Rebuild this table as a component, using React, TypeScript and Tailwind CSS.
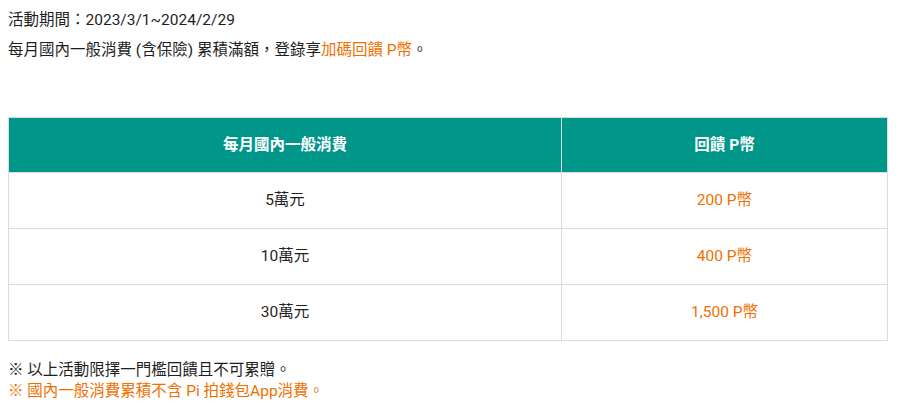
import React from "react";

const rows = [
  { a: "5萬元", b: "200 P幣" },
  { a: "10萬元", b: "400 P幣" },
  { a: "30萬元", b: "1,500 P幣" },
];

export default function App() {
  return (
    <div
      className="w-[900px] h-[415px] bg-white px-[8px] pt-[10px] text-[15.5px] leading-[21px] text-[#1e1e1e]"
      style={{ fontFamily: 'Roboto, "Noto Sans CJK TC", sans-serif' }}
    >
      <p>活動期間：2023/3/1~2024/2/29</p>
      <p className="mt-[9px]">
        每月國內一般消費 (含保險) 累積滿額，登錄享<span className="text-[#f07000]">加碼回饋 P幣</span>。
      </p>
      <div className="mt-[56px] w-[880px] border border-[#dcdcdc]">
        <div className="grid grid-cols-[553px_1fr] bg-[#00968a] text-white font-bold h-[54px]">
          <div className="flex items-center justify-center border-r border-[#dcdcdc]">每月國內一般消費</div>
          <div className="flex items-center justify-center">回饋 P幣</div>
        </div>
        {rows.map((r) => (
          <div key={r.a} className="grid grid-cols-[553px_1fr] h-[56px] border-t border-[#dcdcdc]">
            <div className="flex items-center justify-center border-r border-[#dcdcdc]">{r.a}</div>
            <div className="flex items-center justify-center text-[#f07000]">{r.b}</div>
          </div>
        ))}
      </div>
      <p className="mt-[19px]">※ 以上活動限擇一門檻回饋且不可累贈。</p>
      <p className="text-[#f07000]">※ 國內一般消費累積不含 Pi 拍錢包App消費。</p>
    </div>
  );
}
